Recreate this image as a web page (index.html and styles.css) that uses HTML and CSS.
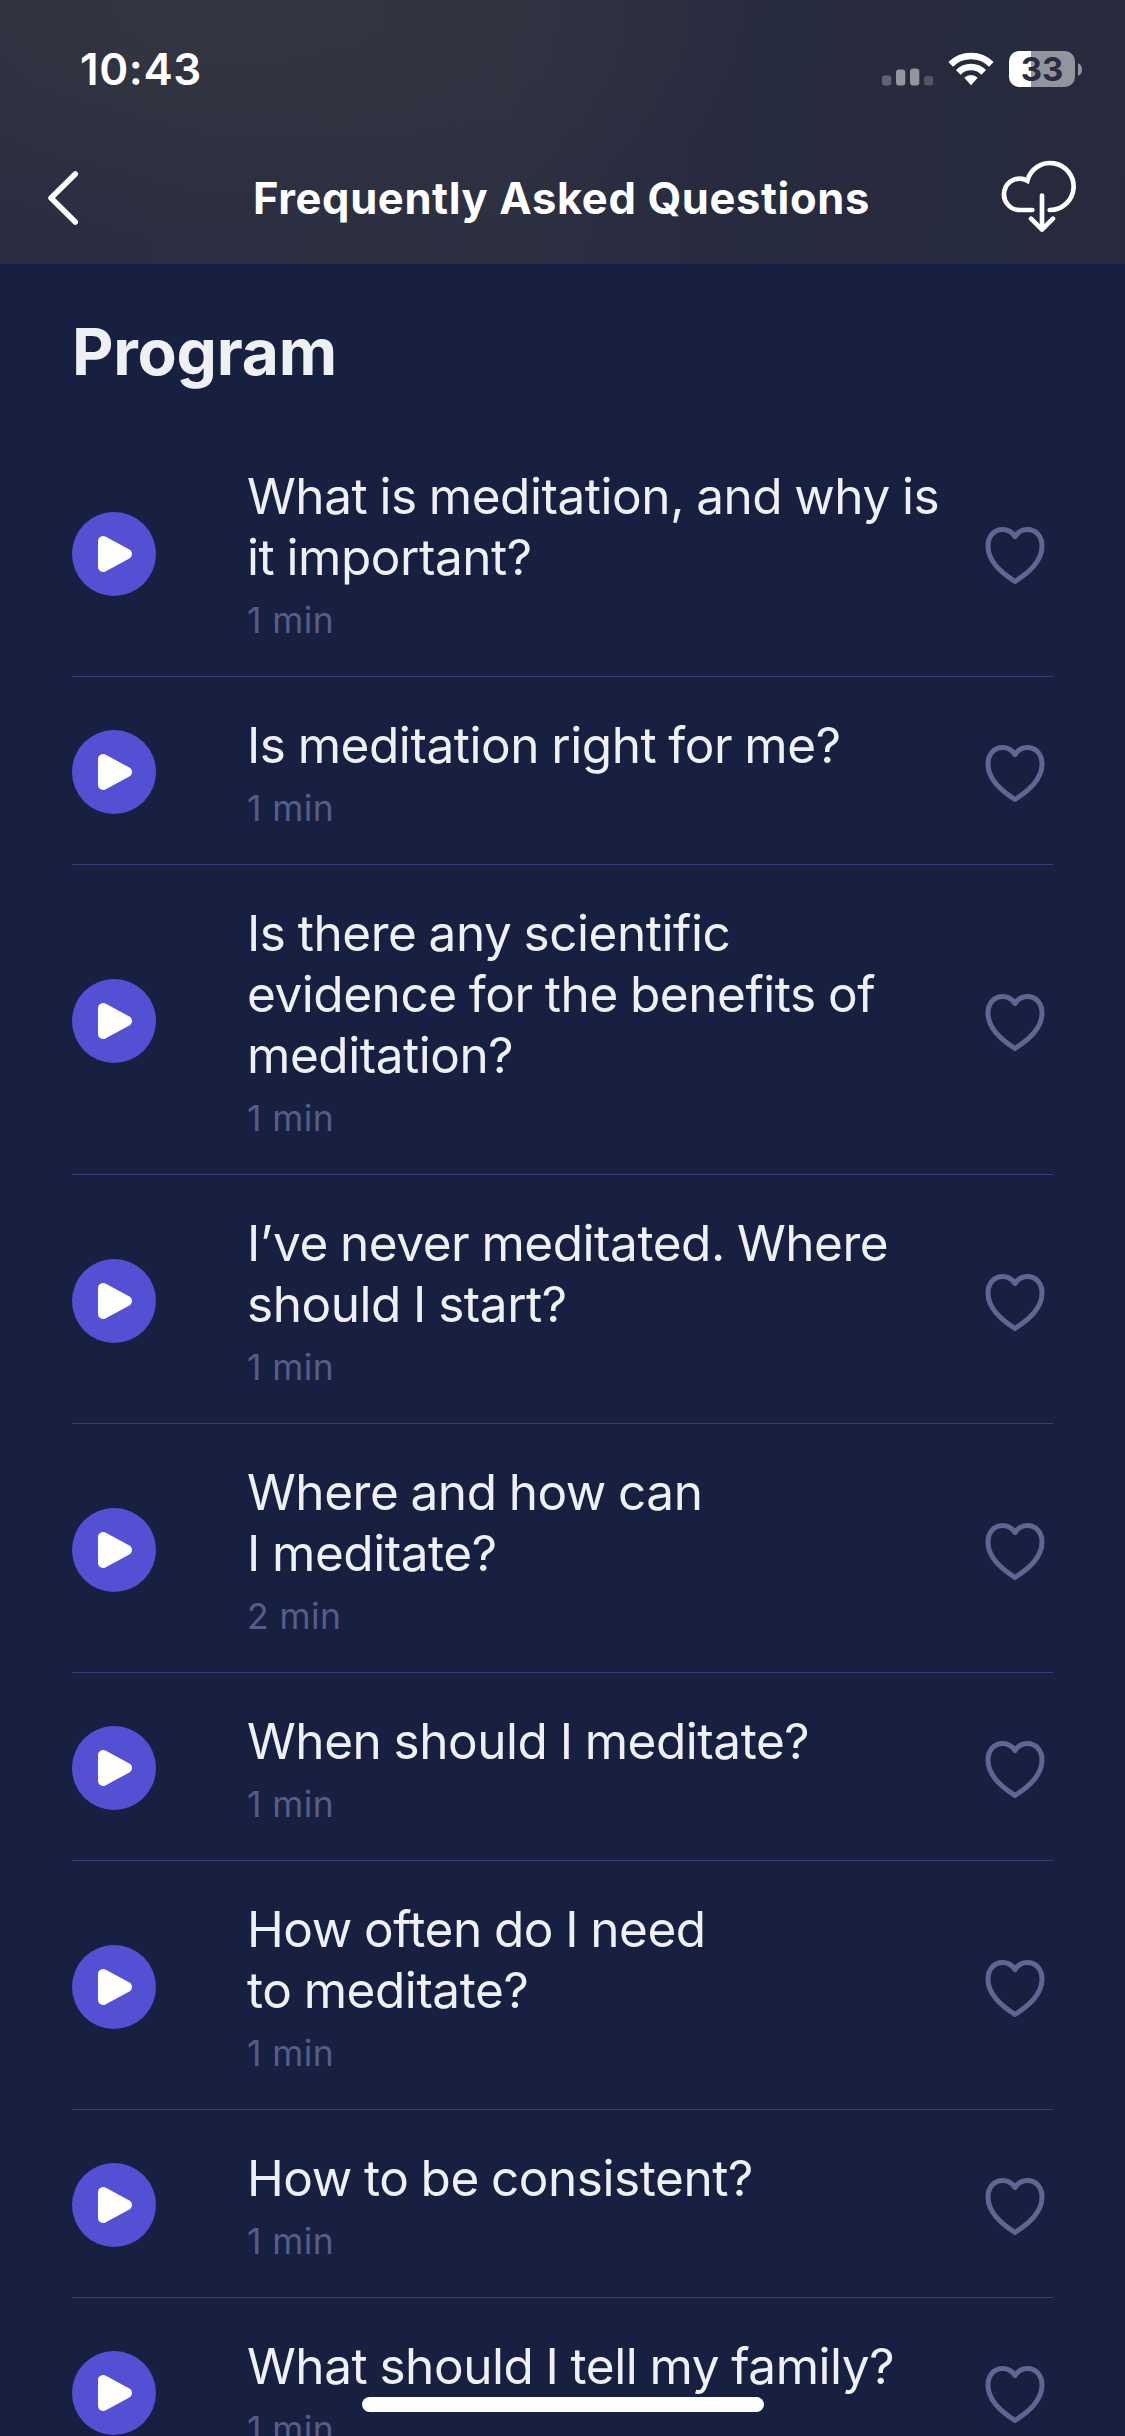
FILE: index.html
```html
<!DOCTYPE html>
<html lang="en">
<head>
<meta charset="utf-8">
<title>Frequently Asked Questions</title>
<link rel="stylesheet" href="styles.css">
</head>
<body>
<svg class="defs" width="0" height="0">
  <symbol id="play" viewBox="0 0 84 84"><circle cx="42" cy="42" r="42" fill="#5450d4"/><path d="M31 29v26L55 42z" fill="#fff" stroke="#fff" stroke-width="10" stroke-linejoin="round"/></symbol>
  <symbol id="heart" viewBox="0 0 60 58"><path d="M30 10.500C27 6 22.500 3.500 17.500 3.500C9 3.500 3 10.500 3 20C3 35 15.500 46 30 55.500C44.500 46 57 35 57 20C57 10.500 51 3.500 42.500 3.500C37.500 3.500 33 6 30 10.500z" fill="none" stroke="#5f6692" stroke-width="5" stroke-linejoin="round"/></symbol>
</svg>
<div class="screen">
  <header class="header">
    <div class="status">
      <span class="time">10:43</span>
      <div class="indicators">
        <svg class="signal" width="52" height="18" viewBox="0 0 52 18" fill="#fff"><rect x="0" y="7.500" width="9.300" height="10" rx="3" opacity=".27"/><rect x="14" y="1.500" width="9.300" height="16" rx="3" opacity=".5"/><rect x="28" y=".5" width="9.300" height="17" rx="3" opacity=".5"/><rect x="42" y="8" width="9.300" height="9.500" rx="3" opacity=".2"/></svg>
        <svg class="wifi" width="46" height="34" viewBox="0 0 46 34" fill="none" stroke="#fff" stroke-width="6.600"><path d="M2.700 12.300A29 29 0 0 1 43.300 12.300"/><path d="M10.300 20.300A18 18 0 0 1 35.700 20.300"/><path d="M16.300 25.700A10 10 0 0 1 29.700 25.700L23 33.200z" fill="#fff" stroke="none"/></svg>
        <div class="battery"><span>33</span></div>
        <svg class="nub" width="4" height="13" viewBox="0 0 4 13"><path d="M0 0Q4 2 4 6.500T0 13z" fill="#92949e"/></svg>
      </div>
    </div>
    <div class="nav">
      <svg class="back" width="78" height="60" viewBox="0 0 78 60"><path d="M30.300 6L6 30L30.300 54" fill="none" stroke="#fff" stroke-width="5.500" stroke-linecap="round" stroke-linejoin="round"/></svg>
      <h1 class="title">Frequently Asked Questions</h1>
      <svg class="cloud" width="78" height="74" viewBox="60 60 234 222" fill="none" stroke="#fff" stroke-width="14" stroke-linecap="round"><path d="M157 210H120A47 47 0 1 1 142 122A70.500 70.500 0 1 1 209 210"/><path d="M186 167V266"/><path d="M153 236L186 269L219 236" stroke-linejoin="round"/></svg>
    </div>
  </header>
  <main class="content">
    <h2 class="section">Program</h2>
    <ul class="list">
      <li class="row"><svg class="play"><use href="#play"/></svg><div class="text"><p class="q">What is meditation, and why is<br>it important?</p><p class="len">1 min</p></div><svg class="heart"><use href="#heart"/></svg></li>
      <li class="row"><svg class="play"><use href="#play"/></svg><div class="text"><p class="q">Is meditation right for me?</p><p class="len">1 min</p></div><svg class="heart"><use href="#heart"/></svg></li>
      <li class="row"><svg class="play"><use href="#play"/></svg><div class="text"><p class="q">Is there any scientific<br>evidence for the benefits of<br>meditation?</p><p class="len">1 min</p></div><svg class="heart"><use href="#heart"/></svg></li>
      <li class="row"><svg class="play"><use href="#play"/></svg><div class="text"><p class="q">I’ve never meditated. Where<br>should I start?</p><p class="len">1 min</p></div><svg class="heart"><use href="#heart"/></svg></li>
      <li class="row"><svg class="play"><use href="#play"/></svg><div class="text"><p class="q">Where and how can<br>I meditate?</p><p class="len">2 min</p></div><svg class="heart"><use href="#heart"/></svg></li>
      <li class="row"><svg class="play"><use href="#play"/></svg><div class="text"><p class="q">When should I meditate?</p><p class="len">1 min</p></div><svg class="heart"><use href="#heart"/></svg></li>
      <li class="row"><svg class="play"><use href="#play"/></svg><div class="text"><p class="q">How often do I need<br>to meditate?</p><p class="len">1 min</p></div><svg class="heart"><use href="#heart"/></svg></li>
      <li class="row"><svg class="play"><use href="#play"/></svg><div class="text"><p class="q">How to be consistent?</p><p class="len">1 min</p></div><svg class="heart"><use href="#heart"/></svg></li>
      <li class="row"><svg class="play"><use href="#play"/></svg><div class="text"><p class="q">What should I tell my family?</p><p class="len">1 min</p></div><svg class="heart"><use href="#heart"/></svg></li>
    </ul>
  </main>
  <div class="home-bar"></div>
</div>
</body>
</html>
```
FILE: styles.css
```css
* { box-sizing: border-box; margin: 0; padding: 0; }
body { background: #172041; font-family: Inter, "Liberation Sans", sans-serif; }
.defs { display: block; height: 0; }
.screen { position: relative; width: 1125px; height: 2436px; overflow: hidden; background: #172041; }
.header {
  height: 264px;
  background:
    radial-gradient(ellipse 560px 230px at 230px 10px, rgba(53, 55, 64, .9), rgba(53, 55, 64, 0)),
    linear-gradient(95deg, #2a2d40 0%, #2d3041 45%, #282b3f 65%, #262a3c 100%);
}
.status { display: flex; justify-content: space-between; height: 138px; padding: 0 43px 0 80px; }
.time { margin-top: 42px; font-size: 44px; line-height: 54px; font-weight: 600; color: #fff; letter-spacing: .6px; }
.indicators { display: flex; align-items: flex-start; }
.signal { margin-top: 67.500px; }
.wifi { margin: 52px 15px 0 14.500px; }
.battery {
  width: 66px; height: 36px; margin-top: 51px; border-radius: 10px;
  background: linear-gradient(90deg, #fff 22px, #92949e 22px);
  color: #292c40; font-size: 33px; font-weight: 700; line-height: 36px; text-align: center;
}
.nub { margin: 63px 0 0 3px; }
.nav { display: flex; align-items: center; justify-content: space-between; height: 120px; padding: 0 47px 0 46px; }
.back { margin-left: -1px; }
.title { font-size: 43.500px; line-height: 54px; font-weight: 700; color: #fff; letter-spacing: .63px; white-space: nowrap; }
.cloud { margin-top: -2px; }
.section { height: 164px; padding: 49px 0 0 72px; font-size: 64px; line-height: 78px; font-weight: 700; letter-spacing: -.2px; color: #eff0f3; }
.list { list-style: none; margin: 0 72px; }
.row { display: flex; align-items: center; border-bottom: 1px solid #363e77; }
.play { flex: none; width: 84px; height: 84px; margin: 4px 91px 0 0; }
.text { flex: 1; padding: 37.700px 0 33.300px; }
.q { font-size: 49.500px; line-height: 61px; letter-spacing: -.45px; word-spacing: -1.300px; color: #eff0f3; white-space: nowrap; }
.len { margin-top: 11px; font-size: 35.500px; line-height: 44px; letter-spacing: .4px; color: #565d87; }
.heart { flex: none; width: 60px; height: 58px; margin: 6px 8px 0 0; }
.home-bar { position: absolute; left: 362px; top: 2397px; width: 402px; height: 15px; border-radius: 8px; background: #fff; }
```
